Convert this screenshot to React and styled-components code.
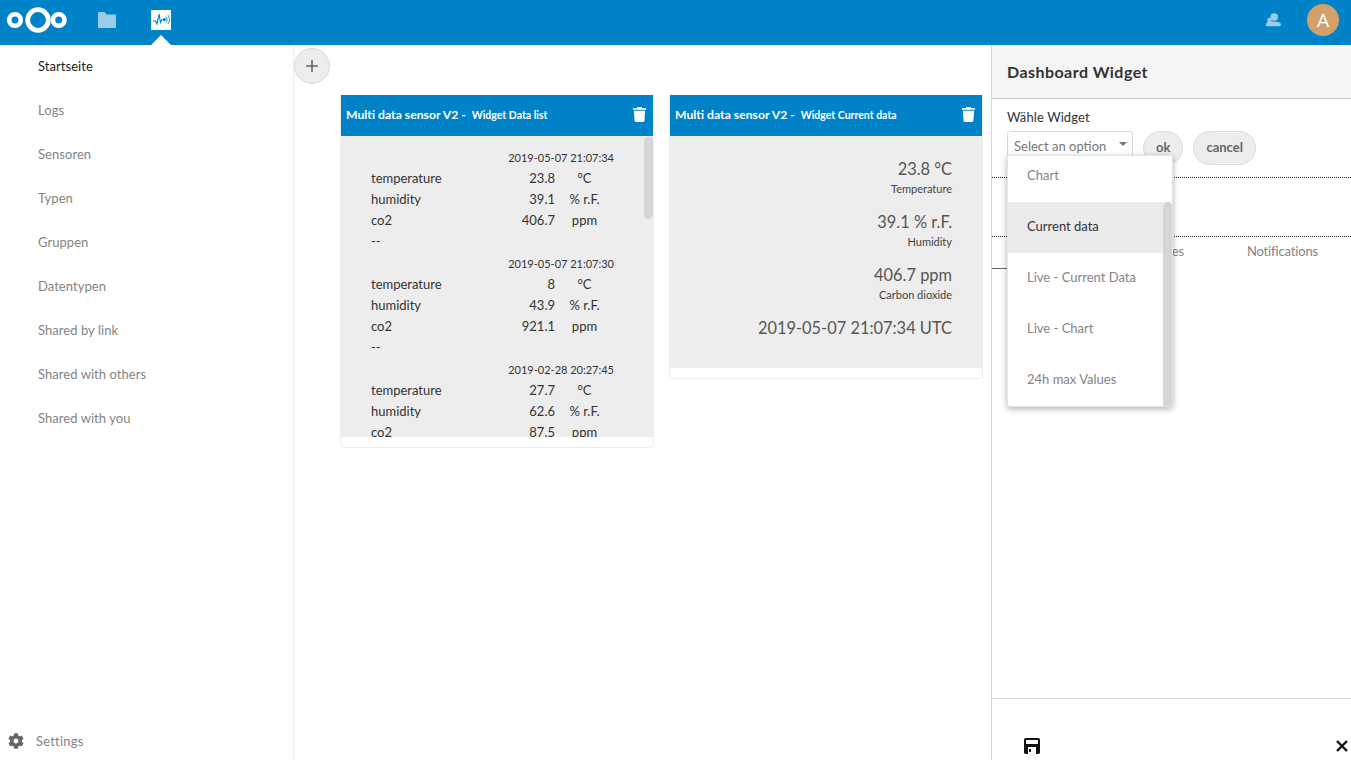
import React from "react";
import styled, { createGlobalStyle } from "styled-components";
import { FaTrash, FaCog } from "react-icons/fa";

const Global = createGlobalStyle`
  html, body { margin: 0; padding: 0; height: 100%; background: #fff; }
  body { font-family: "Lato", "Open Sans", sans-serif; font-size: 13px; color: #222; }
  * { box-sizing: border-box; }
`;

const Page = styled.div`display:flex;flex-direction:column;height:100vh;overflow:hidden;`;
const Header = styled.header`display:flex;align-items:flex-start;height:45px;flex:none;background:#0082c9;position:relative;`;
const Logo = styled.svg`width:62px;height:30px;margin:5px 0 0 6px;flex:none;`;
const AppLink = styled.div`width:20px;height:20px;margin-top:10px;display:flex;align-items:center;justify-content:center;position:relative;flex:none;`;
const Folder = styled(AppLink)`margin-left:29px;opacity:.6;`;
const ActiveApp = styled(AppLink)`margin-left:34px;background:#fff;
  &::after{content:"";position:absolute;left:0;top:25px;border-left:10px solid transparent;border-right:10px solid transparent;border-bottom:10px solid #fff;}
`;
const Spacer = styled.div`flex:1;`;
const Contacts = styled.svg`width:16px;height:16px;margin:12px 26px 0 0;opacity:.6;`;
const Avatar = styled.div`width:32px;height:32px;border-radius:50%;background:#d3a069;color:#fff;font-size:18px;display:flex;align-items:center;justify-content:center;margin:4px 12px 0 0;`;

const Main = styled.div`display:flex;flex:1;min-height:0;`;
const Sidebar = styled.nav`width:294px;flex:none;border-right:1px solid #ededed;display:flex;flex-direction:column;`;
const NavList = styled.div`flex:1;`;
const NavItem = styled.div`height:44px;padding:0 0 2px 38px;letter-spacing:.05px;display:flex;align-items:center;color:${p=>p.$active?"#222":"#848484"};`;
const SettingsRow = styled.div`height:38px;display:flex;align-items:center;padding-left:8px;color:#848484;letter-spacing:.2px;svg{color:#666;width:16px;height:16px;margin-right:12px;}`;

const Content = styled.main`flex:1;min-width:0;padding-top:3px;`;
const AddButton = styled.div`width:36px;height:36px;border-radius:50%;background:#ededed;border:1px solid #dbdbdb;display:flex;align-items:center;justify-content:center;svg{display:block}`;
const Cards = styled.div`display:flex;gap:15px;margin:11px 0 0 46px;align-items:flex-start;`;
const Card = styled.section`width:314px;background:#fff;border:1px solid #ededed;border-top:0;border-radius:0 0 5px 5px;padding-bottom:10px;margin:0;`;
const CardHead = styled.div`height:41px;background:#0082c9;color:#fff;display:flex;align-items:center;justify-content:space-between;padding:0 7px 2px 5px;font-weight:700;font-size:12.2px;white-space:nowrap;svg{width:13px;height:15px;display:block;margin-top:-1px}`;
const Sub = styled.span`font-size:10.5px;margin-left:3px;`;
const ListBody = styled.div`height:301px;background:#ededed;overflow:hidden;position:relative;padding:10.7px 0 0 30px;`;
const Thumb = styled.div`position:absolute;right:0;top:1px;width:9px;height:82px;border-radius:4px;background:#d6d6d6;`;
const DateRow = styled.div`height:21.2px;line-height:21.2px;font-size:11px;text-align:right;width:243px;color:#333;`;
const DataRow = styled.div`display:grid;grid-template-columns:130px 54px 59px;height:21.2px;line-height:21.2px;color:#333;`;
const Value = styled.span`text-align:right;`;
const Unit = styled.span`text-align:center;`;
const CurrentBody = styled.div`height:232px;background:#ededed;padding:21px 30px 0 0;text-align:right;color:#555;`;
const Big = styled.div`font-size:16.4px;line-height:24px;`;
const Small = styled.div`font-size:11px;line-height:15px;margin:0 0 14px;color:#444;`;

const Panel = styled.aside`width:360px;flex:none;border-left:1px solid #dbdbdb;display:flex;flex-direction:column;`;
const PanelHead = styled.div`height:54px;flex:none;background:#f5f5f5;border-bottom:1px solid #c4c4c4;padding-left:15px;display:flex;align-items:center;font-size:16px;letter-spacing:.45px;font-weight:700;color:#333;`;
const PanelBody = styled.div`flex:1;`;
const FormBlock = styled.div`height:79px;padding:10px 0 0 15px;border-bottom:1px dotted #222;`;
const Label = styled.div`line-height:16px;color:#333;margin-bottom:6px;letter-spacing:.1px;`;
const FormRow = styled.div`display:flex;align-items:flex-start;gap:10px;`;
const SelectWrap = styled.div`position:relative;width:126px;height:30px;`;
const SelectBox = styled.div`height:30px;border:1px solid #dbdbdb;border-radius:3px;padding:7px 0 0 6px;color:#777;line-height:15px;position:relative;
  &::after{content:"";position:absolute;right:5px;top:10px;border-left:4px solid transparent;border-right:4px solid transparent;border-top:4px solid #777;}
`;
const Menu = styled.div`position:absolute;left:0;top:24px;width:166px;height:252px;background:#fff;border:1px solid #e4e4e4;border-radius:0 0 3px 3px;box-shadow:0 2px 6px rgba(0,0,0,.3);z-index:5;overflow:hidden;`;
const MenuList = styled.div`margin-top:-5px;`;
const MenuItem = styled.div`height:51px;padding:0 0 4px 19px;margin-right:${p=>p.$hl?"9px":"0"};display:flex;align-items:center;color:${p=>p.$hl?"#333":"#848484"};background:${p=>p.$hl?"#ebebeb":"transparent"};`;
const MenuThumb = styled.div`position:absolute;right:0;top:46px;bottom:0;width:9px;background:#d6d6d6;border-radius:4px 4px 0 0;`;
const Pill = styled.div`height:34px;padding:0 ${p=>p.$pad}px 2px;border-radius:17px;background:#ededed;border:1px solid #dbdbdb;color:#666;font-weight:700;display:flex;align-items:center;`;
const Middle = styled.div`height:59px;border-bottom:1px dotted #222;`;
const Tabs = styled.div`height:32px;display:flex;position:relative;color:#848484;letter-spacing:-.15px;`;
const Tab = styled.div`height:32px;padding-bottom:4px;display:flex;align-items:center;width:${p=>p.$w}px;border-bottom:${p=>p.$active?"1px solid #666":"0"};justify-content:${p=>p.$end?"flex-end":"center"};`;
const PanelFoot = styled.div`height:62px;flex:none;border-top:1px solid #dbdbdb;display:flex;justify-content:space-between;align-items:flex-end;padding:0 3px 6px 32px;color:#111;svg{display:block}`;
const CloseGlyph = styled.svg`width:12px;height:12px;margin-bottom:2px;`;

const readings = [
  ["2019-05-07 21:07:34", "23.8", "39.1", "406.7"],
  ["2019-05-07 21:07:30", "8", "43.9", "921.1"],
  ["2019-02-28 20:27:45", "27.7", "62.6", "87.5"],
];
const nav = ["Startseite","Logs","Sensoren","Typen","Gruppen","Datentypen","Shared by link","Shared with others","Shared with you"];
const options = ["Chart","Current data","Live - Current Data","Live - Chart","24h max Values"];

export default function App() {
  return (
    <Page>
      <Global />
      <Header>
        <Logo viewBox="0 0 62 30" fill="none" stroke="#fff">
          <circle cx="9" cy="15" r="5.8" strokeWidth="4.6" />
          <circle cx="32" cy="15" r="10.3" strokeWidth="4.8" />
          <circle cx="52.7" cy="15" r="5.8" strokeWidth="4.6" />
        </Logo>
        <Folder>
          <svg width="18" height="16" viewBox="0 0 18 16"><path d="M0 1.5C0 .7.5 0 1 0h5.5l2 2.5H17c.6 0 1 .4 1 1V15c0 .6-.4 1-1 1H1c-.6 0-1-.4-1-1z" fill="#fff"/></svg>
        </Folder>
        <ActiveApp>
          <svg width="18" height="14" viewBox="0 0 18 14" fill="none" stroke="#0082c9" strokeWidth="1.1">
            <path d="M1 8h2.5l1.5 3 2-10 1.5 8.5 1-2.5h2" />
            <circle cx="12.4" cy="6.5" r="1" fill="#0082c9" />
            <path d="M14 3.5c1.5 1.7 1.5 4.3 0 6M15.8 2c2.2 2.6 2.2 6.4 0 9" strokeWidth=".9" />
          </svg>
        </ActiveApp>
        <Spacer />
        <Contacts viewBox="0 0 16 16" fill="#fff">
          <circle cx="9.2" cy="5" r="3.8" />
          <circle cx="4.4" cy="8" r="2.2" />
          <path d="M1 13c0-2.4 1.6-3.4 3.4-3.4S16 9 16 12.5c0 1.3-1 1.7-2 1.7H3c-1.2 0-2-.3-2-1.2z" />
        </Contacts>
        <Avatar>A</Avatar>
      </Header>
      <Main>
        <Sidebar>
          <NavList>
            {nav.map((n, i) => <NavItem key={n} $active={i === 0}>{n}</NavItem>)}
          </NavList>
          <SettingsRow><FaCog />Settings</SettingsRow>
        </Sidebar>
        <Content>
          <AddButton>
            <svg width="14" height="14" viewBox="0 0 14 14" stroke="#666" strokeWidth="1.6"><path d="M7 1v12M1 7h12" /></svg>
          </AddButton>
          <Cards>
            <Card>
              <CardHead>
                <span>Multi data sensor V2 - <Sub>Widget Data list</Sub></span>
                <FaTrash />
              </CardHead>
              <ListBody>
                <Thumb />
                {readings.map(r => (
                  <div key={r[0]}>
                    <DateRow>{r[0]}</DateRow>
                    <DataRow><span>temperature</span><Value>{r[1]}</Value><Unit>°C</Unit></DataRow>
                    <DataRow><span>humidity</span><Value>{r[2]}</Value><Unit>% r.F.</Unit></DataRow>
                    <DataRow><span>co2</span><Value>{r[3]}</Value><Unit>ppm</Unit></DataRow>
                    <DataRow><span>--</span></DataRow>
                  </div>
                ))}
              </ListBody>
            </Card>
            <Card>
              <CardHead>
                <span>Multi data sensor V2 - <Sub>Widget Current data</Sub></span>
                <FaTrash />
              </CardHead>
              <CurrentBody>
                <Big>23.8 °C</Big><Small>Temperature</Small>
                <Big>39.1 % r.F.</Big><Small>Humidity</Small>
                <Big>406.7 ppm</Big><Small>Carbon dioxide</Small>
                <Big>2019-05-07 21:07:34 UTC</Big>
              </CurrentBody>
            </Card>
          </Cards>
        </Content>
        <Panel>
          <PanelHead>Dashboard Widget</PanelHead>
          <PanelBody>
            <FormBlock>
              <Label>Wähle Widget</Label>
              <FormRow>
                <SelectWrap>
                  <SelectBox>Select an option</SelectBox>
                  <Menu>
                    <MenuThumb />
                    <MenuList>
                      {options.map((o, i) => <MenuItem key={o} $hl={i === 1}>{o}</MenuItem>)}
                    </MenuList>
                  </Menu>
                </SelectWrap>
                <Pill $pad={12}>ok</Pill>
                <Pill $pad={12}>cancel</Pill>
              </FormRow>
            </FormBlock>
            <Middle />
            <Tabs>
              <Tab $active $w={90}>Info</Tab>
              <Tab $w={102} $end>Devices</Tab>
              <Tab $w={134} $end>Notifications</Tab>
            </Tabs>
          </PanelBody>
          <PanelFoot>
            <svg width="16" height="16" viewBox="0 0 16 16">
              <rect width="16" height="16" rx="1.8" fill="#111" />
              <rect x="2" y="2" width="12" height="4" fill="#fff" />
              <rect x="4" y="9" width="8" height="7" fill="#fff" />
              <rect x="5" y="11" width="2" height="3" fill="#111" />
            </svg>
            <CloseGlyph viewBox="0 0 12 12" stroke="#111" strokeWidth="2.4"><path d="M1 1l10 10M11 1L1 11" /></CloseGlyph>
          </PanelFoot>
        </Panel>
      </Main>
    </Page>
  );
}
